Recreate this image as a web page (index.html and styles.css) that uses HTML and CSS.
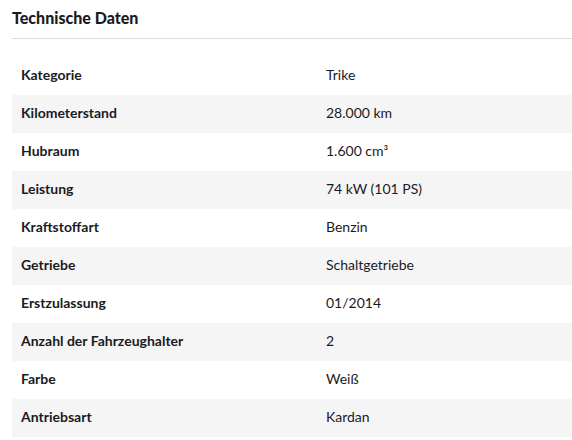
FILE: index.html
```html
<!DOCTYPE html>
<html lang="de">
<head>
<meta charset="utf-8">
<link rel="stylesheet" href="styles.css">
</head>
<body>
<section class="specs">
  <h2 class="specs-title">Technische Daten</h2>
  <div class="specs-table">
    <div class="row"><div class="label">Kategorie</div><div class="value">Trike</div></div>
    <div class="row"><div class="label">Kilometerstand</div><div class="value">28.000 km</div></div>
    <div class="row"><div class="label">Hubraum</div><div class="value">1.600 cm³</div></div>
    <div class="row"><div class="label">Leistung</div><div class="value">74 kW (101 PS)</div></div>
    <div class="row"><div class="label">Kraftstoffart</div><div class="value">Benzin</div></div>
    <div class="row"><div class="label">Getriebe</div><div class="value">Schaltgetriebe</div></div>
    <div class="row"><div class="label">Erstzulassung</div><div class="value">01/2014</div></div>
    <div class="row"><div class="label">Anzahl der Fahrzeughalter</div><div class="value">2</div></div>
    <div class="row"><div class="label">Farbe</div><div class="value">Weiß</div></div>
    <div class="row"><div class="label">Antriebsart</div><div class="value">Kardan</div></div>
  </div>
</section>
</body>
</html>
```
FILE: styles.css
```css
html, body {
  margin: 0;
  padding: 0;
  background: #fff;
}
body {
  font-family: Lato, "Open Sans", sans-serif;
  color: #1b1b1f;
  padding-left: 12px;
}
.specs-title {
  margin: 0;
  font-size: 16px;
  font-weight: 900;
  line-height: 18px;
  padding-top: 9px;
  padding-bottom: 11px;
  border-bottom: 1px solid #dcdcdc;
}
.specs-table {
  margin-top: 18px;
}
.row {
  display: grid;
  grid-template-columns: 305px 1fr;
  height: 38px;
  align-items: center;
  font-size: 14px;
  line-height: 16px;
  padding-bottom: 2px;
  box-sizing: border-box;
}
.row:nth-child(even) {
  background: #f5f5f5;
}
.label {
  font-weight: 700;
  padding-left: 9px;
}
.value {
  padding-left: 9px;
}
```
